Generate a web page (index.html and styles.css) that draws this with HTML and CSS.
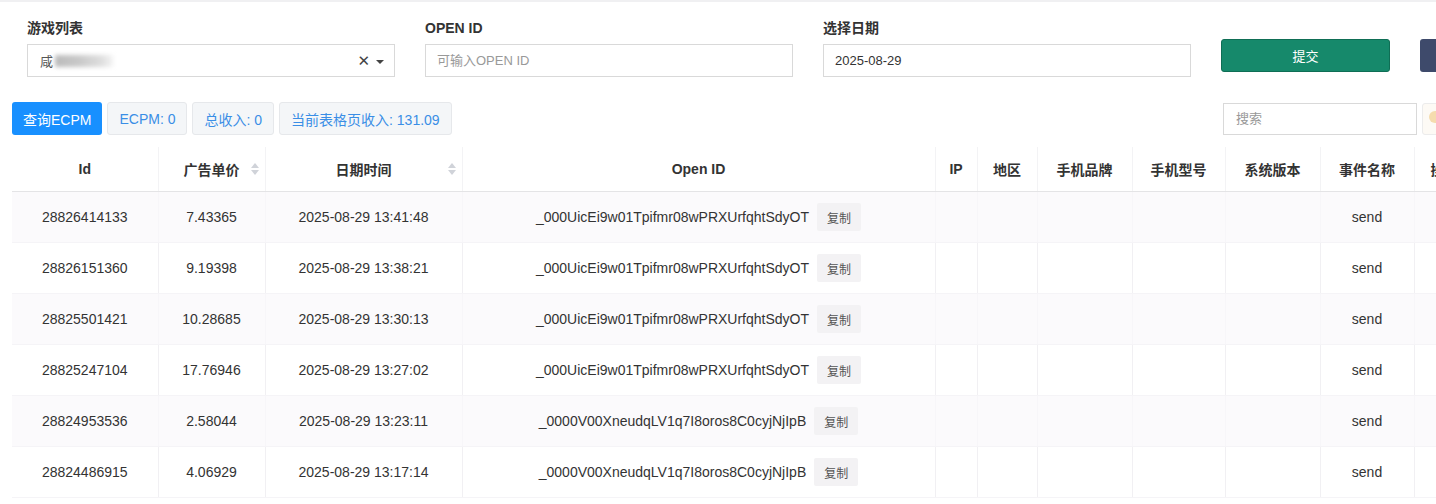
FILE: index.html
```html
<!DOCTYPE html>
<html lang="zh-CN">

<head>
    <meta charset="UTF-8">
    <meta name="viewport" content="width=device-width, initial-scale=1.0">
    <title>ECPM 查询</title>

    <link rel="stylesheet" href="styles.css">

</head>

<body>
    <div class="page">
        <!-- Filter form -->
        <div class="filter-row">
            <div class="field">
                <label class="field-label">游戏列表</label>
                <div class="select-box">
                    <span class="select-value">咸<span class="blurred"></span></span>
                    <span class="select-icons">
                        <span class="clear-icon">✕</span>
                        <span class="caret"></span>
                    </span>
                </div>
            </div>
            <div class="field">
                <label class="field-label">OPEN ID</label>
                <input class="text-input" type="text" placeholder="可输入OPEN ID">
            </div>
            <div class="field">
                <label class="field-label">选择日期</label>
                <input class="text-input" type="text" value="2025-08-29">
            </div>
            <div class="field-btns">
                <button class="btn-submit">提交</button>
                <button class="btn-dark"></button>
            </div>
        </div>

        <!-- Toolbar -->
        <div class="toolbar">
            <div class="toolbar-left">
                <button class="btn-primary">查询ECPM</button>
                <span class="stat">ECPM: 0</span>
                <span class="stat">总收入: 0</span>
                <span class="stat">当前表格页收入: 131.09</span>
            </div>
            <div class="toolbar-right">
                <input class="search-input" type="text" placeholder="搜索">
                <button class="btn-tool"><span class="tool-dot"></span></button>
            </div>
        </div>

        <!-- Data table -->
        <div class="table-wrap">
            <table class="data-table">
                <colgroup>
                    <col style="width:146px">
                    <col style="width:107px">
                    <col style="width:197px">
                    <col style="width:473px">
                    <col style="width:42px">
                    <col style="width:60px">
                    <col style="width:95px">
                    <col style="width:93px">
                    <col style="width:95px">
                    <col style="width:94px">
                    <col style="width:80px">
                </colgroup>
                <thead>
                    <tr>
                        <th>Id</th>
                        <th class="sortable">广告单价<span class="sort-icon"></span></th>
                        <th class="sortable">日期时间<span class="sort-icon"></span></th>
                        <th>Open ID</th>
                        <th>IP</th>
                        <th>地区</th>
                        <th>手机品牌</th>
                        <th>手机型号</th>
                        <th>系统版本</th>
                        <th>事件名称</th>
                        <th class="cut">操作</th>
                    </tr>
                </thead>
                <tbody>
                    <tr>
                        <td>28826414133</td>
                        <td>7.43365</td>
                        <td>2025-08-29 13:41:48</td>
                        <td><span class="openid">_000UicEi9w01Tpifmr08wPRXUrfqhtSdyOT</span><button class="btn-copy">复制</button></td>
                        <td></td><td></td><td></td><td></td><td></td>
                        <td>send</td>
                        <td></td>
                    </tr>
                    <tr>
                        <td>28826151360</td>
                        <td>9.19398</td>
                        <td>2025-08-29 13:38:21</td>
                        <td><span class="openid">_000UicEi9w01Tpifmr08wPRXUrfqhtSdyOT</span><button class="btn-copy">复制</button></td>
                        <td></td><td></td><td></td><td></td><td></td>
                        <td>send</td>
                        <td></td>
                    </tr>
                    <tr>
                        <td>28825501421</td>
                        <td>10.28685</td>
                        <td>2025-08-29 13:30:13</td>
                        <td><span class="openid">_000UicEi9w01Tpifmr08wPRXUrfqhtSdyOT</span><button class="btn-copy">复制</button></td>
                        <td></td><td></td><td></td><td></td><td></td>
                        <td>send</td>
                        <td></td>
                    </tr>
                    <tr>
                        <td>28825247104</td>
                        <td>17.76946</td>
                        <td>2025-08-29 13:27:02</td>
                        <td><span class="openid">_000UicEi9w01Tpifmr08wPRXUrfqhtSdyOT</span><button class="btn-copy">复制</button></td>
                        <td></td><td></td><td></td><td></td><td></td>
                        <td>send</td>
                        <td></td>
                    </tr>
                    <tr>
                        <td>28824953536</td>
                        <td>2.58044</td>
                        <td>2025-08-29 13:23:11</td>
                        <td><span class="openid">_0000V00XneudqLV1q7I8oros8C0cyjNjIpB</span><button class="btn-copy">复制</button></td>
                        <td></td><td></td><td></td><td></td><td></td>
                        <td>send</td>
                        <td></td>
                    </tr>
                    <tr>
                        <td>28824486915</td>
                        <td>4.06929</td>
                        <td>2025-08-29 13:17:14</td>
                        <td><span class="openid">_0000V00XneudqLV1q7I8oros8C0cyjNjIpB</span><button class="btn-copy">复制</button></td>
                        <td></td><td></td><td></td><td></td><td></td>
                        <td>send</td>
                        <td></td>
                    </tr>
                </tbody>
            </table>
        </div>
    </div>
</body>

</html>
```

FILE: styles.css
```css
/* Base */
body {
    margin: 0;
    background-color: #fff;
    font-family: "Liberation Sans", "Noto Sans CJK SC", sans-serif;
    font-size: 14px;
    color: #333;
    overflow: hidden;
}

.page {
    border-top: 2px solid #f0f0f2;
}

/* Filter form */
.filter-row {
    display: flex;
    align-items: flex-start;
    gap: 30px;
    padding: 16px 0 0 27px;
}

.field {
    display: flex;
    flex-direction: column;
    flex-shrink: 0;
    width: 368px;
}

.field-label {
    font-weight: bold;
    font-size: 14px;
    line-height: 20px;
    color: #333;
    margin-bottom: 6px;
}

.select-box,
.text-input {
    box-sizing: border-box;
    height: 33px;
    border: 1px solid #d9d9d9;
    background: #fff;
}

.select-box {
    display: flex;
    align-items: center;
    justify-content: space-between;
    padding: 0 10px 0 12px;
}

.select-value {
    display: flex;
    align-items: center;
    font-size: 13px;
    color: #555;
}

.blurred {
    display: inline-block;
    width: 58px;
    height: 12px;
    margin-left: 2px;
    background: linear-gradient(90deg, #bbb 0, #c8c8c8 40%, #dedede 80%, #f4f4f4 100%);
    filter: blur(2px);
}

.select-icons {
    display: flex;
    align-items: center;
    gap: 6px;
    color: #444;
}

.clear-icon {
    font-size: 15px;
    font-family: "DejaVu Sans", sans-serif;
}

.caret {
    width: 0;
    height: 0;
    border-left: 4px solid transparent;
    border-right: 4px solid transparent;
    border-top: 4px solid #444;
    margin-top: 2px;
}

.text-input {
    width: 100%;
    padding: 0 11px;
    font-family: inherit;
    font-size: 13px;
    color: #333;
    outline: none;
}

.text-input::placeholder,
.search-input::placeholder {
    color: #999;
}

.field-btns {
    display: flex;
    flex-shrink: 0;
    gap: 30px;
    padding-top: 21px;
}

.btn-submit {
    width: 169px;
    height: 33px;
    border: 1px solid #0f6e55;
    border-radius: 3px;
    background-color: #16896b;
    color: #fff;
    font-family: inherit;
    font-size: 13px;
}

.btn-dark {
    width: 100px;
    height: 33px;
    border: none;
    border-radius: 3px;
    background-color: #3e4a6b;
}

/* Toolbar */
.toolbar {
    display: flex;
    justify-content: space-between;
    align-items: center;
    margin-top: 25px;
    padding-left: 12px;
}

.toolbar-left {
    display: flex;
    gap: 5px;
}

.btn-primary {
    height: 33px;
    padding: 0 11px;
    border: none;
    border-radius: 3px;
    background-color: #1890ff;
    color: #fff;
    font-family: inherit;
    font-size: 14px;
}

.stat {
    display: flex;
    align-items: center;
    box-sizing: border-box;
    height: 33px;
    padding: 0 11px;
    border: 1px solid #e6e8eb;
    border-radius: 3px;
    background-color: #f4f6f8;
    color: #3a8ee6;
}

.toolbar-right {
    display: flex;
    gap: 5px;
    margin-right: -40px;
}

.search-input {
    box-sizing: border-box;
    width: 194px;
    height: 32px;
    padding: 0 12px;
    border: 1px solid #d9d9d9;
    font-family: inherit;
    font-size: 13px;
    outline: none;
}

.btn-tool {
    width: 54px;
    height: 32px;
    padding: 0 0 0 6px;
    border: 1px solid #ececec;
    border-radius: 3px;
    background-color: #fdfaf5;
    text-align: left;
}

.tool-dot {
    display: inline-block;
    width: 12px;
    height: 12px;
    border-radius: 50%;
    background-color: #f5dcae;
}

/* Data table */
.table-wrap {
    margin: 12px 0 0 12px;
    overflow: hidden;
}

.data-table {
    table-layout: fixed;
    width: 1482px;
    border-collapse: collapse;
}

.data-table th {
    position: relative;
    height: 44px;
    padding: 0;
    font-weight: bold;
    color: #333;
    text-align: center;
    white-space: nowrap;
    border-left: 1px solid #f3f3f5;
    border-bottom: 1px solid #e4e4e6;
}

.data-table th:first-child,
.data-table td:first-child {
    border-left: none;
}

.data-table th.cut {
    text-align: left;
    padding-left: 16px;
}

.sort-icon {
    position: absolute;
    right: 6px;
    top: 16px;
    width: 0;
    height: 0;
    border-left: 4px solid transparent;
    border-right: 4px solid transparent;
    border-bottom: 5px solid #d0d3d9;
}

.sort-icon::after {
    content: "";
    position: absolute;
    left: -4px;
    top: 7px;
    border-left: 4px solid transparent;
    border-right: 4px solid transparent;
    border-top: 5px solid #d0d3d9;
}

.data-table td {
    height: 50px;
    padding: 0;
    text-align: center;
    white-space: nowrap;
    color: #333;
    border-left: 1px solid #f1f0f3;
    border-bottom: 1px solid #f5f4f7;
}

.data-table tbody tr:nth-child(odd) td {
    background-color: #fbfafc;
    border-left-color: #f7f6f9;
}

.openid {
    vertical-align: middle;
}

.btn-copy {
    height: 28px;
    margin-left: 8px;
    padding: 0 10px;
    border: none;
    border-radius: 2px;
    background-color: #f3f2f4;
    color: #555;
    font-family: inherit;
    font-size: 12px;
    vertical-align: middle;
}
```
